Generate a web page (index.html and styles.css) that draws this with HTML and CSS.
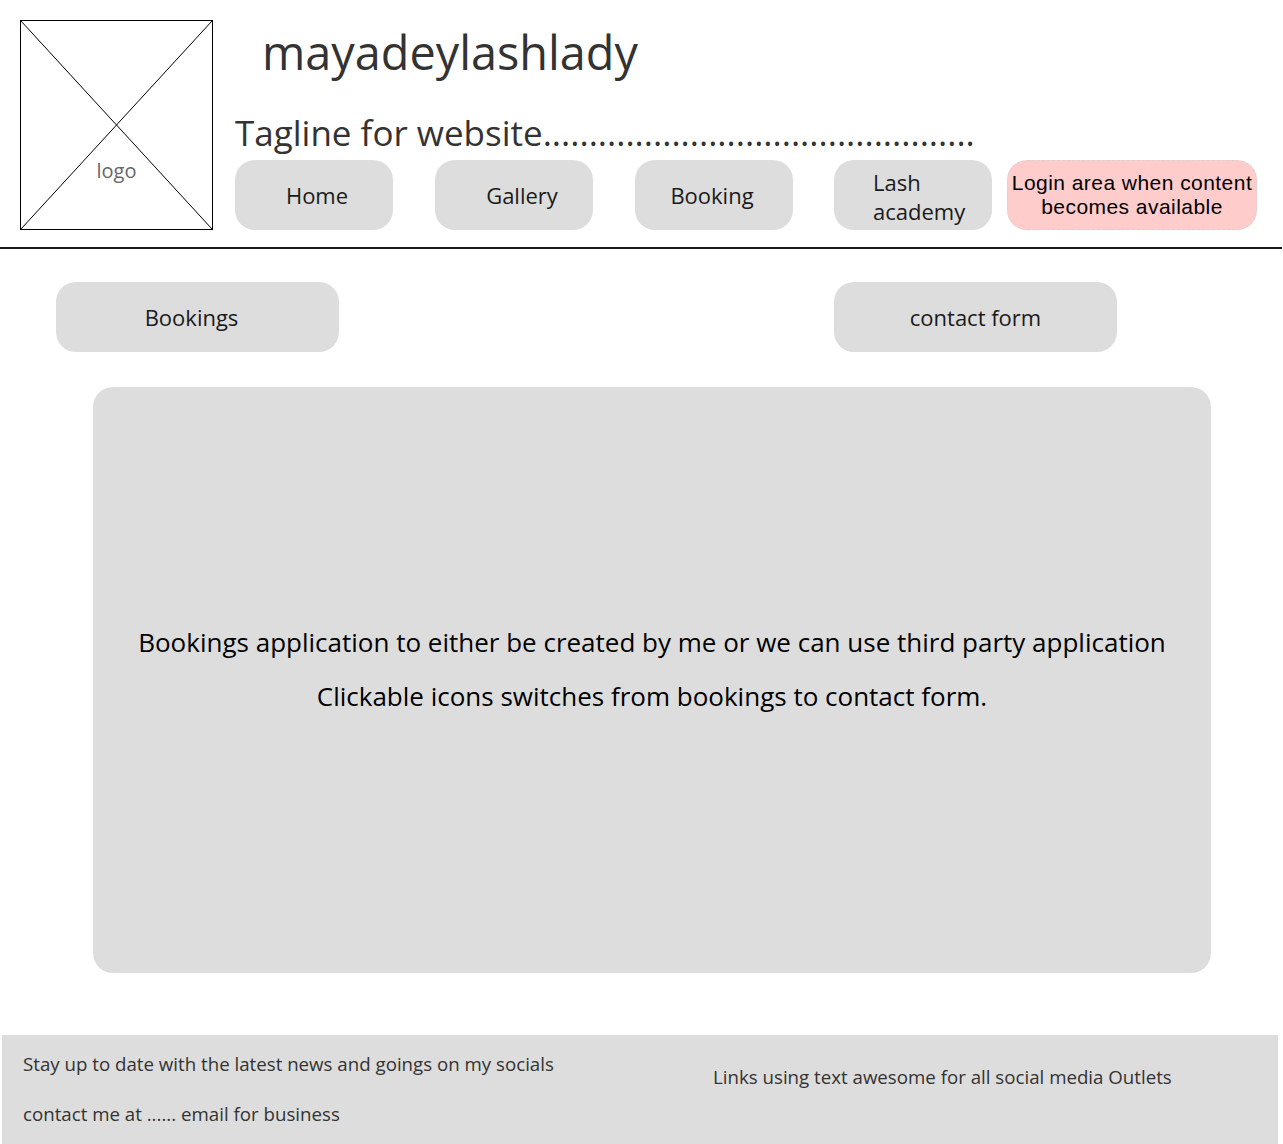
FILE: index.html
```html
<!DOCTYPE html>
<html lang="en">
<head>
<meta charset="utf-8">
<title>mayadeylashlady</title>
<link rel="stylesheet" href="styles.css">
</head>
<body>
<header class="header">
  <div class="logo">
    <svg class="logo-x" width="191" height="208" viewBox="0 0 191 208" preserveAspectRatio="none">
      <line x1="0" y1="0" x2="191" y2="208" stroke="#000" stroke-width="1"/>
      <line x1="191" y1="0" x2="0" y2="208" stroke="#000" stroke-width="1"/>
    </svg>
    <span class="logo-text">logo</span>
  </div>
  <div class="header-main">
    <h1 class="title">mayadeylashlady</h1>
    <p class="tagline">Tagline for website...............................................</p>
    <nav class="nav">
      <a class="nav-btn nav-home">Home</a>
      <a class="nav-btn nav-gallery">Gallery</a>
      <a class="nav-btn nav-booking">Booking</a>
      <a class="nav-btn nav-lash">Lash<br>academy</a>
      <a class="nav-login">Login area when content<br>becomes available</a>
    </nav>
  </div>
</header>
<hr class="divider">
<main class="content">
  <div class="tabs">
    <a class="tab tab-bookings">Bookings</a>
    <a class="tab tab-contact">contact form</a>
  </div>
  <section class="panel">
    <p>Bookings application to either be created by me or we can use third party application</p>
    <p>Clickable icons switches from bookings to contact form.</p>
  </section>
</main>
<footer class="footer">
  <div class="footer-left">
    <p>Stay up to date with the latest news and goings on my socials</p>
    <p>contact me at ...... email for business</p>
  </div>
  <div class="footer-right">
    <p>Links using text awesome for all social media Outlets</p>
  </div>
</footer>
</body>
</html>
```
FILE: styles.css
```css
* { box-sizing: border-box; }
html, body { margin: 0; padding: 0; }
body {
  font-family: "Open Sans", "DejaVu Sans", sans-serif;
  background: #fff;
  color: #1a1a1a;
  width: 1283px;
  overflow: hidden;
}
p { margin: 0; }

.header {
  display: flex;
  padding: 20px 0 0 20px;
  height: 247px;
}
.logo {
  position: relative;
  width: 193px;
  height: 210px;
  border: 1px solid #000;
  flex: none;
}
.logo-x { position: absolute; left: 0; top: 0; display: block; }
.logo-text {
  position: absolute;
  left: 0; right: 0;
  top: 136px;
  text-align: center;
  font-size: 20px;
  line-height: 28px;
  color: #666;
}
.header-main {
  margin-left: 22px;
  display: flex;
  flex-direction: column;
}
.title {
  margin: 0 0 0 27px;
  font-weight: 400;
  font-size: 46.8px;
  line-height: 64px;
  color: #333;
}
.tagline {
  margin-top: 27px;
  font-size: 35px;
  line-height: 44px;
  color: #333;
  height: 44px;
  white-space: nowrap;
}
.nav {
  display: flex;
  align-items: stretch;
  margin-top: 5px;
}
.nav-btn, .nav-login {
  height: 70px;
  border-radius: 20px;
  display: flex;
  align-items: center;
  justify-content: center;
}
.nav-btn {
  width: 158px;
  background: #ddd;
  font-size: 22px;
  line-height: 29px;
  color: #1a1a1a;
  margin-right: 42px;
}
.nav-home { padding-left: 6px; }
.nav-gallery { padding-left: 16px; }
.nav-booking { padding-right: 4px; margin-right: 41px; }
.nav-lash {
  justify-content: flex-start;
  padding-left: 39px;
  padding-top: 4px;
  margin-right: 15px;
}
.nav-login {
  width: 250px;
  background: #ffcccc;
  border: 1px dashed #dcd0d0;
  font-family: "Liberation Sans", Arial, sans-serif;
  font-size: 21px;
  letter-spacing: 0.45px;
  line-height: 24px;
  color: #000;
  text-align: center;
  white-space: nowrap;
  padding-bottom: 1px;
}

.divider {
  margin: 0;
  border: 0;
  height: 2px;
  background: #1a1a1a;
  width: 1282px;
}

.content {
  padding: 33px 0 0 0;
}
.tabs {
  display: flex;
  padding-left: 56px;
}
.tab {
  width: 283px;
  height: 70px;
  border-radius: 20px;
  background: #ddd;
  display: flex;
  align-items: center;
  justify-content: center;
  font-size: 22px;
  color: #1a1a1a;
}
.tab-bookings { padding-right: 12px; margin-right: 495px; }
.panel {
  margin: 35px 0 0 93px;
  width: 1118px;
  height: 586px;
  background: #ddd;
  border-radius: 20px;
  display: flex;
  flex-direction: column;
  align-items: center;
  justify-content: center;
  padding-bottom: 22px;
  font-size: 26px;
  line-height: 54px;
  color: #000;
}

.footer {
  margin: 62px 0 0 2px;
  width: 1276px;
  height: 110px;
  background: #ddd;
  display: flex;
  font-size: 18.7px;
  color: #333;
}
.footer-left {
  width: 690px;
  padding: 14px 0 0 21px;
  line-height: 30px;
}
.footer-left p + p { margin-top: 20px; }
.footer-right {
  padding: 27px 0 0 21px;
  line-height: 30px;
}
```
